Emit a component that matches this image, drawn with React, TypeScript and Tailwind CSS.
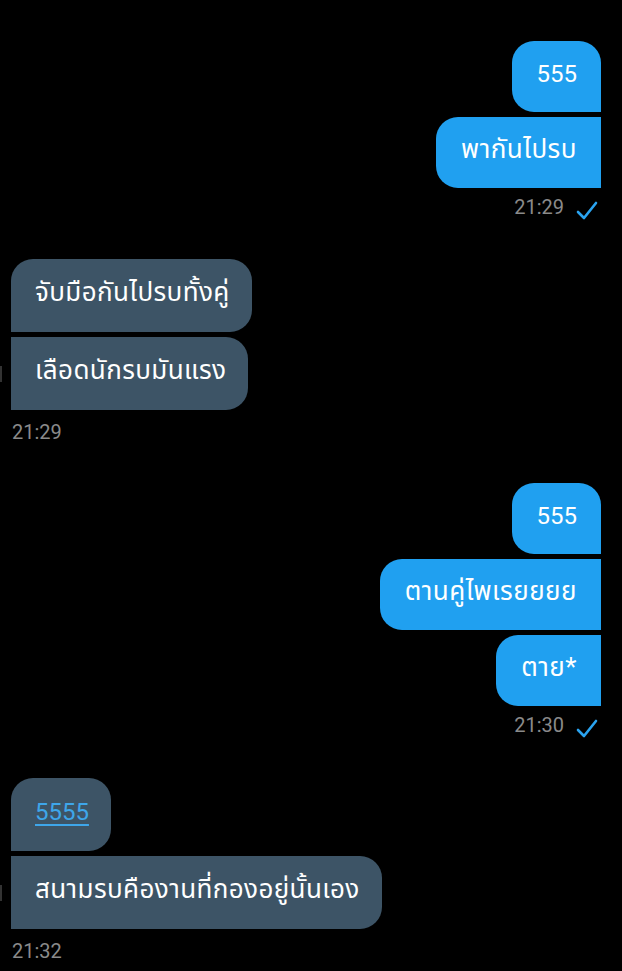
const font = { fontFamily: 'Roboto, "Noto Sans Thai", "Noto Sans", "Liberation Sans", sans-serif' };

function Check() {
  return (
    <svg width="22" height="20" viewBox="0 0 22 20" className="ml-[12px] mt-[9px]">
      <polyline points="2,11 8,17 20,2" fill="none" stroke="#2aa3ef" strokeWidth="2.6" strokeLinecap="round" strokeLinejoin="round" />
    </svg>
  );
}

function Sent({ text, first }: { text: string; first?: boolean }) {
  const latin = /^[0-9]+$/.test(text);
  return (
    <div
      className={
        "flex h-[71px] items-center rounded-l-[22px] bg-[#20a0f0] pl-[25px] pr-[24px] pb-[6px] text-white " +
        (latin ? "text-[24px] " : "text-[26px] tracking-[0.5px] ") +
        (first ? "rounded-tr-[22px]" : "")
      }
    >
      {text}
    </div>
  );
}

function Received({ children, first, mark }: { children: React.ReactNode; first?: boolean; mark?: boolean }) {
  return (
    <div className="flex items-center">
      <div className={"mr-[9px] h-[16px] w-[2px] " + (mark ? "bg-[#333]" : "bg-transparent")} />
      <div
        className={
          "flex h-[73px] items-center rounded-r-[22px] bg-[#3d5466] pl-[24px] pr-[22px] pb-[6px] text-[26px] tracking-[0.4px] text-white " +
          (first ? "rounded-tl-[22px]" : "")
        }
      >
        {children}
      </div>
    </div>
  );
}

function SentGroup({ items, time }: { items: string[]; time: string }) {
  return (
    <div className="flex flex-col items-end gap-[5px] pr-[21px]">
      {items.map((t, i) => (
        <Sent key={i} text={t} first={i === 0} />
      ))}
      <div className="-mt-[1px] flex items-start pr-[3px]">
        <span className="text-[20px] text-[#8a8a8a]">{time}</span>
        <Check />
      </div>
    </div>
  );
}

export default function App() {
  return (
    <div className="min-h-screen bg-black pt-[41px]" style={font}>
      <SentGroup items={["555", "พากันไปรบ"]} time="21:29" />

      <div className="mt-[37px] flex flex-col items-start gap-[5px]">
        <Received first>จับมือกันไปรบทั้งคู่</Received>
        <Received mark>เลือดนักรบมันแรง</Received>
        <span className="pl-[12px] pt-[2px] text-[20px] text-[#8a8a8a]">21:29</span>
      </div>

      <div className="mt-[36px]">
        <SentGroup items={["555", "ตานคู่ไพเรยยยย", "ตาย*"]} time="21:30" />
      </div>

      <div className="mt-[38px] flex flex-col items-start gap-[5px]">
        <Received first>
          <span className="text-[24px] tracking-normal text-[#3ea6ea] underline underline-offset-[4px]">5555</span>
        </Received>
        <Received mark>สนามรบคืองานที่กองอยู่นั้นเอง</Received>
        <span className="pl-[12px] pt-[2px] text-[20px] text-[#8a8a8a]">21:32</span>
      </div>
    </div>
  );
}
